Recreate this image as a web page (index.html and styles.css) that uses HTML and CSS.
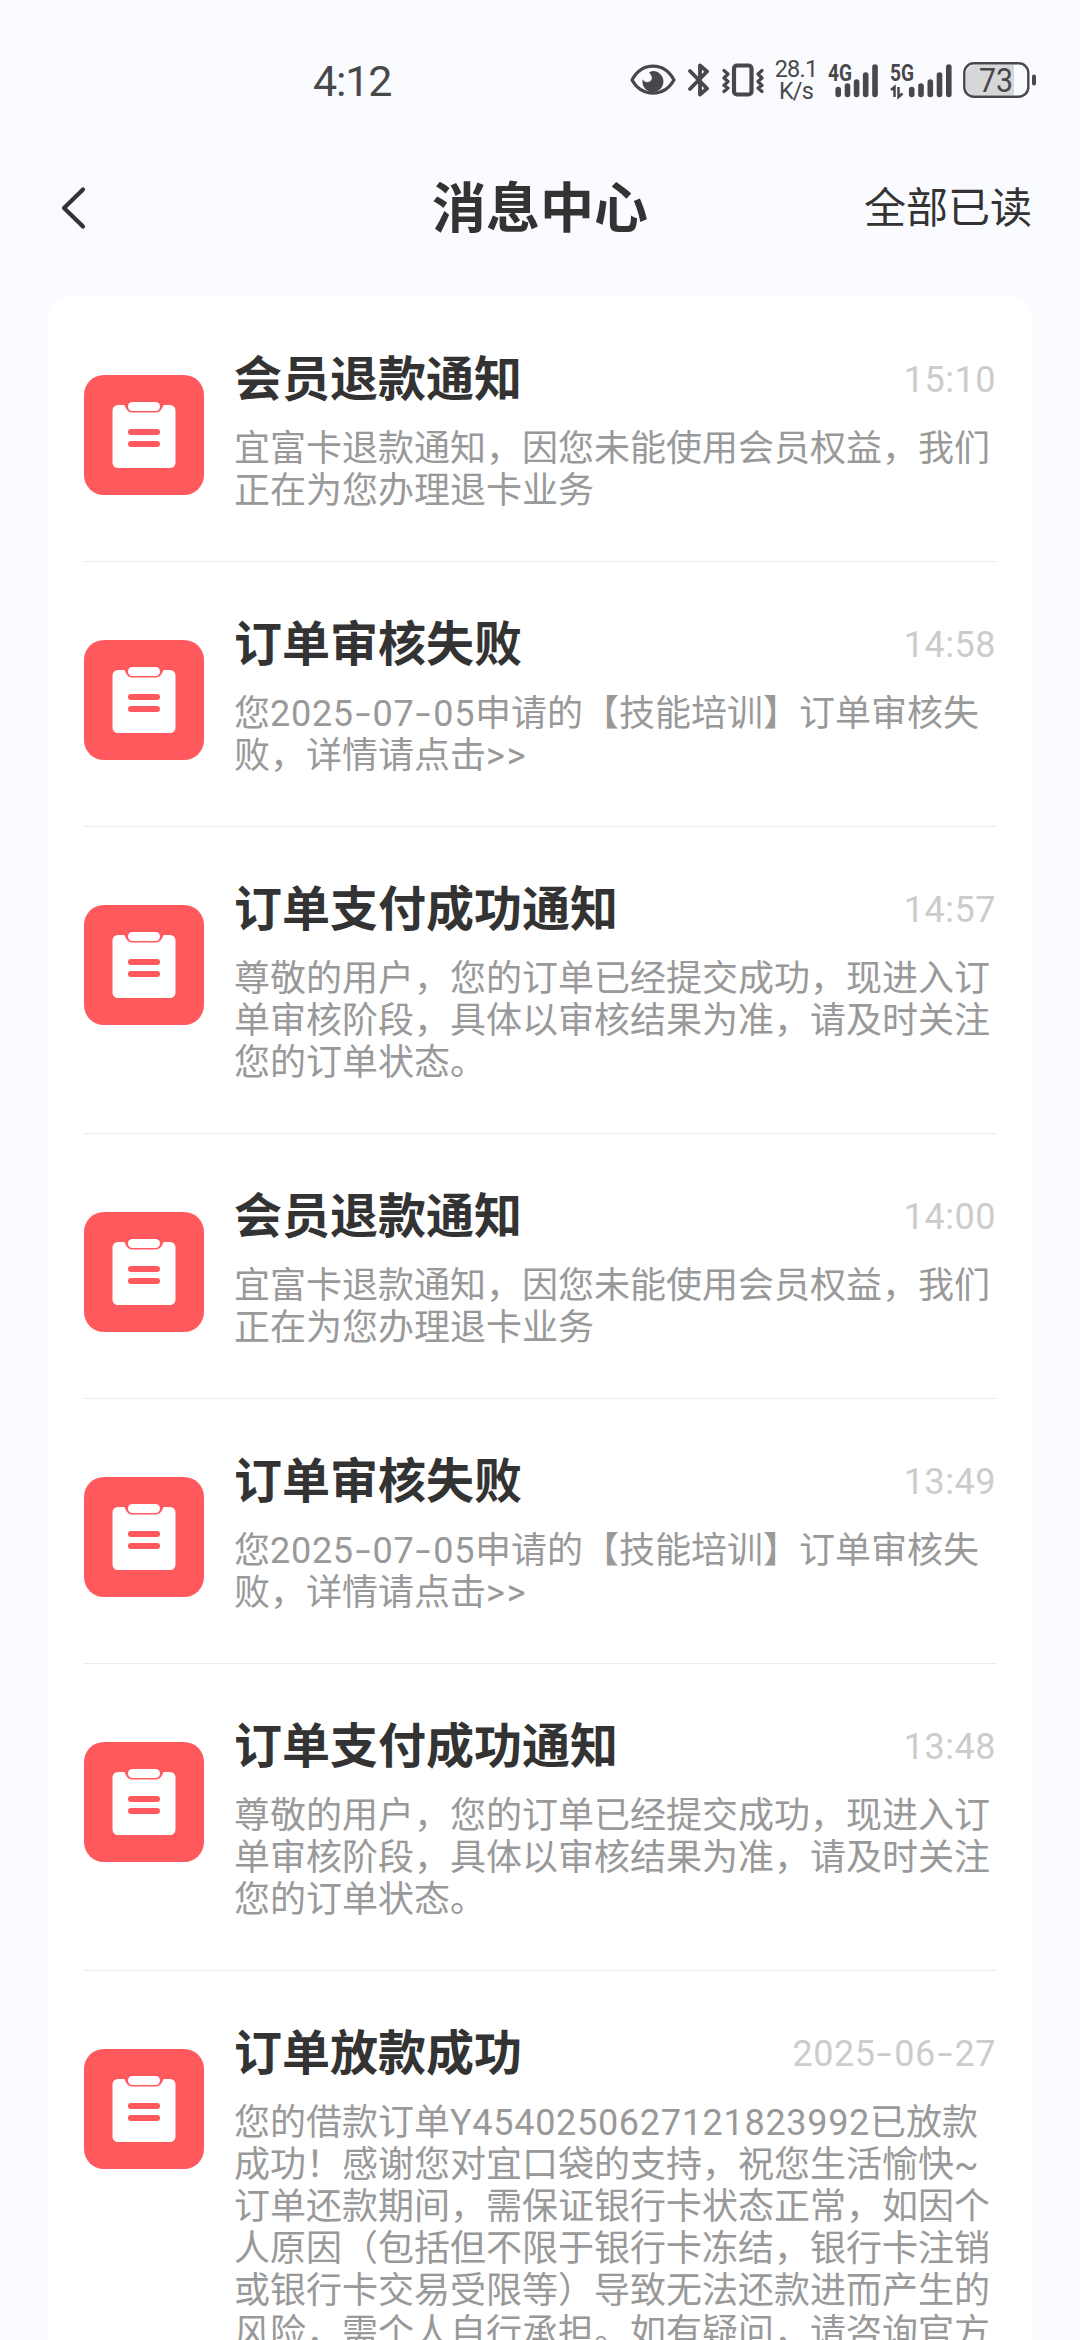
FILE: index.html
```html
<!DOCTYPE html>
<html lang="zh-CN">
<head>
<meta charset="utf-8">
<title>消息中心</title>
<link rel="stylesheet" href="styles.css">
</head>
<body>
<svg class="sprite" width="0" height="0">
  <symbol id="clipboard" viewBox="0 0 120 120">
    <path fill="#fff" d="M34 30h6.500c1.500 4.500 4 7.600 8.500 7.600h22c4.500 0 7-3.100 8.500-7.600H86a5.500 5.500 0 0 1 5.500 5.500V87.500a5.500 5.500 0 0 1-5.500 5.500H34a5.500 5.500 0 0 1-5.500-5.500V35.500A5.500 5.500 0 0 1 34 30z"/>
    <rect x="44" y="27" width="32" height="9" rx="4.500" fill="#fff"/>
    <rect x="44" y="54" width="32" height="6" rx="3" fill="#ff595d"/>
    <rect x="44" y="66" width="32" height="6" rx="3" fill="#ff595d"/>
  </symbol>
</svg>
<div class="screen">
  <div class="status">
    <span class="clock">4:12</span>
    <div class="indicators">
      <svg class="eye" width="46" height="32" viewBox="0 0 46 32">
        <path d="M2 16C12-2.500 34-2.500 44 16C34 33.500 12 33.500 2 16z" fill="none" stroke="#48484b" stroke-width="3.200" stroke-linejoin="round"/>
        <path d="M23 7a10.500 10.500 0 1 1-10.300 8.200c1.500 3.500 6 3.800 8 1.600c2.500-2.800.5-6.500-1.800-8.400A10.500 10.500 0 0 1 23 7z" fill="#48484b"/>
      </svg>
      <svg class="bt" width="22" height="36" viewBox="0 0 22 36">
        <path d="M2 9L19 26.500L12 32.500V3.500L19 9.500L2 27" fill="none" stroke="#48484b" stroke-width="3.800" stroke-linecap="round" stroke-linejoin="round"/>
      </svg>
      <svg class="vibrate" width="44" height="36" viewBox="0 0 44 36">
        <rect x="13" y="3.500" width="17.500" height="29" rx="3" fill="none" stroke="#48484b" stroke-width="4.200"/>
        <path d="M3 8.500l4 3.500l-4 4l4 3.500l-4 4l4 2.500l-4 3.500M41 8.500l-4 3.500l4 4l-4 3.500l4 4l-4 2.500l4 3.500" fill="none" stroke="#48484b" stroke-width="3.200" stroke-linecap="round" stroke-linejoin="round"/>
      </svg>
      <div class="speed"><span>28.1</span><span>K/s</span></div>
      <svg class="signal" width="52" height="36" viewBox="0 0 52 36">
        <text class="net" x="1" y="19" textLength="24" lengthAdjust="spacingAndGlyphs">4G</text>
        <path d="M11.200 27.500v5M20.500 24v8.500M29.600 20v12.500M38.700 13v19.500M48 5v27.500" stroke="#48484b" stroke-width="5.600" stroke-linecap="round"/>
      </svg>
      <svg class="signal second" width="64" height="36" viewBox="0 0 64 36">
        <text class="net" x="1" y="19" textLength="24" lengthAdjust="spacingAndGlyphs">5G</text>
        <path d="M2 28l3.500-3v10M9.500 25v10l4-3.500" fill="none" stroke="#48484b" stroke-width="2.500"/>
        <path d="M22.700 27.500v5M32 24v8.500M41.300 20v12.500M50.500 13v19.500M59.800 5v27.500" stroke="#48484b" stroke-width="5.600" stroke-linecap="round"/>
      </svg>
      <svg class="battery" width="74" height="36" viewBox="0 0 74 36">
        <path d="M12 2.500H51V33.500H12a9 9 0 0 1-9-9V11.500a9 9 0 0 1 9-8.500z" fill="#d6d7d9"/>
        <rect x="1.300" y="1.300" width="64" height="33.400" rx="9.500" fill="none" stroke="#48484b" stroke-width="2.400"/>
        <rect x="69" y="12.500" width="4" height="11" rx="2" fill="#48484b"/>
        <text class="level" x="16" y="29.500" textLength="34" lengthAdjust="spacingAndGlyphs">73</text>
      </svg>
    </div>
  </div>
  <header class="navbar">
    <svg class="back" width="26" height="44" viewBox="0 0 26 44"><path d="M23 3.500L4 22L23 40.500" fill="none" stroke="#333" stroke-width="4.200" stroke-linecap="round" stroke-linejoin="round"/></svg>
    <h1 class="heading">消息中心</h1>
    <span class="read-all">全部已读</span>
  </header>
  <main class="list">
    <article class="item">
      <svg class="badge"><use href="#clipboard"/></svg>
      <div class="body">
        <div class="head"><h2 class="title">会员退款通知</h2><time class="time">15:10</time></div>
        <p class="desc">宜富卡退款通知，因您未能使用会员权益，我们<br>正在为您办理退卡业务</p>
      </div>
    </article>
    <article class="item">
      <svg class="badge"><use href="#clipboard"/></svg>
      <div class="body">
        <div class="head"><h2 class="title">订单审核失败</h2><time class="time">14:58</time></div>
        <p class="desc">您<span class="num">2025<i class="dash">-</i>07<i class="dash">-</i>05</span>申请的【技能培训】订单审核失<br>败，详情请点击<span class="more">&gt;&gt;</span></p>
      </div>
    </article>
    <article class="item">
      <svg class="badge"><use href="#clipboard"/></svg>
      <div class="body">
        <div class="head"><h2 class="title">订单支付成功通知</h2><time class="time">14:57</time></div>
        <p class="desc">尊敬的用户，您的订单已经提交成功，现进入订<br>单审核阶段，具体以审核结果为准，请及时关注<br>您的订单状态。</p>
      </div>
    </article>
    <article class="item">
      <svg class="badge"><use href="#clipboard"/></svg>
      <div class="body">
        <div class="head"><h2 class="title">会员退款通知</h2><time class="time">14:00</time></div>
        <p class="desc">宜富卡退款通知，因您未能使用会员权益，我们<br>正在为您办理退卡业务</p>
      </div>
    </article>
    <article class="item">
      <svg class="badge"><use href="#clipboard"/></svg>
      <div class="body">
        <div class="head"><h2 class="title">订单审核失败</h2><time class="time">13:49</time></div>
        <p class="desc">您<span class="num">2025<i class="dash">-</i>07<i class="dash">-</i>05</span>申请的【技能培训】订单审核失<br>败，详情请点击<span class="more">&gt;&gt;</span></p>
      </div>
    </article>
    <article class="item">
      <svg class="badge"><use href="#clipboard"/></svg>
      <div class="body">
        <div class="head"><h2 class="title">订单支付成功通知</h2><time class="time">13:48</time></div>
        <p class="desc">尊敬的用户，您的订单已经提交成功，现进入订<br>单审核阶段，具体以审核结果为准，请及时关注<br>您的订单状态。</p>
      </div>
    </article>
    <article class="item">
      <svg class="badge"><use href="#clipboard"/></svg>
      <div class="body">
        <div class="head"><h2 class="title">订单放款成功</h2><time class="time">2025<i class="dash">-</i>06<i class="dash">-</i>27</time></div>
        <p class="desc">您的借款订单<span class="num">Y4540250627121823992</span>已放款<br>成功！感谢您对宜口袋的支持，祝您生活愉快~<br>订单还款期间，需保证银行卡状态正常，如因个<br>人原因（包括但不限于银行卡冻结，银行卡注销<br>或银行卡交易受限等）导致无法还款进而产生的<br>风险，需个人自行承担。如有疑问，请咨询官方</p>
      </div>
    </article>
  </main>
</div>
</body>
</html>
```
FILE: styles.css
```css
* { box-sizing: border-box; margin: 0; padding: 0; }
body {
  background: #fafbff;
  color: #333;
  font-family: Roboto, "Noto Sans CJK SC", sans-serif;
}
.sprite { display: block; }
.screen {
  width: 1080px;
  height: 2340px;
  overflow: hidden;
  display: flex;
  flex-direction: column;
}
.status {
  height: 160px;
  padding: 0 43px 0 313px;
  display: flex;
  justify-content: space-between;
  align-items: center;
  flex: none;
  color: #48484b;
}
.clock { font-size: 43px; line-height: 50px; letter-spacing: -1.2px; padding-top: 1px; }
.indicators { display: flex; align-items: center; height: 40px; }
.bt { margin-left: 12px; }
.vibrate { margin-left: 11px; }
.speed {
  width: 42px;
  margin-left: 10px;
  display: flex;
  flex-direction: column;
  align-items: center;
  font-size: 23.5px;
  line-height: 22px;
  letter-spacing: -0.8px;
}
.signal { margin-left: 10px; overflow: visible; }
.second { margin-left: 10px; }
.net { font: 700 24px Roboto, sans-serif; fill: #48484b; }
.battery { margin-left: 10px; overflow: visible; }
.level { font: 400 33px Roboto, sans-serif; fill: #48484b; }
.navbar {
  height: 96px;
  padding: 0 48px 0 60px;
  display: grid;
  grid-template-columns: 180px 1fr 192px;
  align-items: center;
  flex: none;
}
.heading {
  padding-top: 3px;
  font-size: 54px;
  line-height: 60px;
  font-weight: 700;
  text-align: center;
}
.read-all { padding-top: 1px; font-size: 42px; line-height: 60px; text-align: right; }
.list {
  margin: 41px 48px 0;
  padding: 0 36px;
  flex: 1;
  min-height: 0;
  overflow: hidden;
  background: #fff;
  border-radius: 18px 18px 0 0;
}
.item {
  display: flex;
  gap: 30px;
  padding: 52px 0 49px;
  border-bottom: 1px solid #ececec;
}
.badge {
  width: 120px;
  height: 120px;
  margin-top: 26px;
  flex: none;
  background: #ff595d;
  border-radius: 20px;
}
.body { flex: 1; min-width: 0; }
.head {
  height: 62px;
  display: flex;
  justify-content: space-between;
  align-items: center;
}
.title { font-size: 48px; line-height: 56px; font-weight: 700; }
.time {
  color: #ccc;
  font-size: 36px;
  line-height: 42px;
  letter-spacing: 0.5px;
}
.desc {
  margin-top: 17px;
  color: #999;
  font-size: 36px;
  line-height: 42px;
  white-space: nowrap;
}
.num { letter-spacing: 0.7px; }
.more { letter-spacing: 1.8px; }
.dash {
  display: inline-block;
  width: 18.8px;
  text-align: center;
  font-style: normal;
  transform: scaleX(1.5);
}
```
